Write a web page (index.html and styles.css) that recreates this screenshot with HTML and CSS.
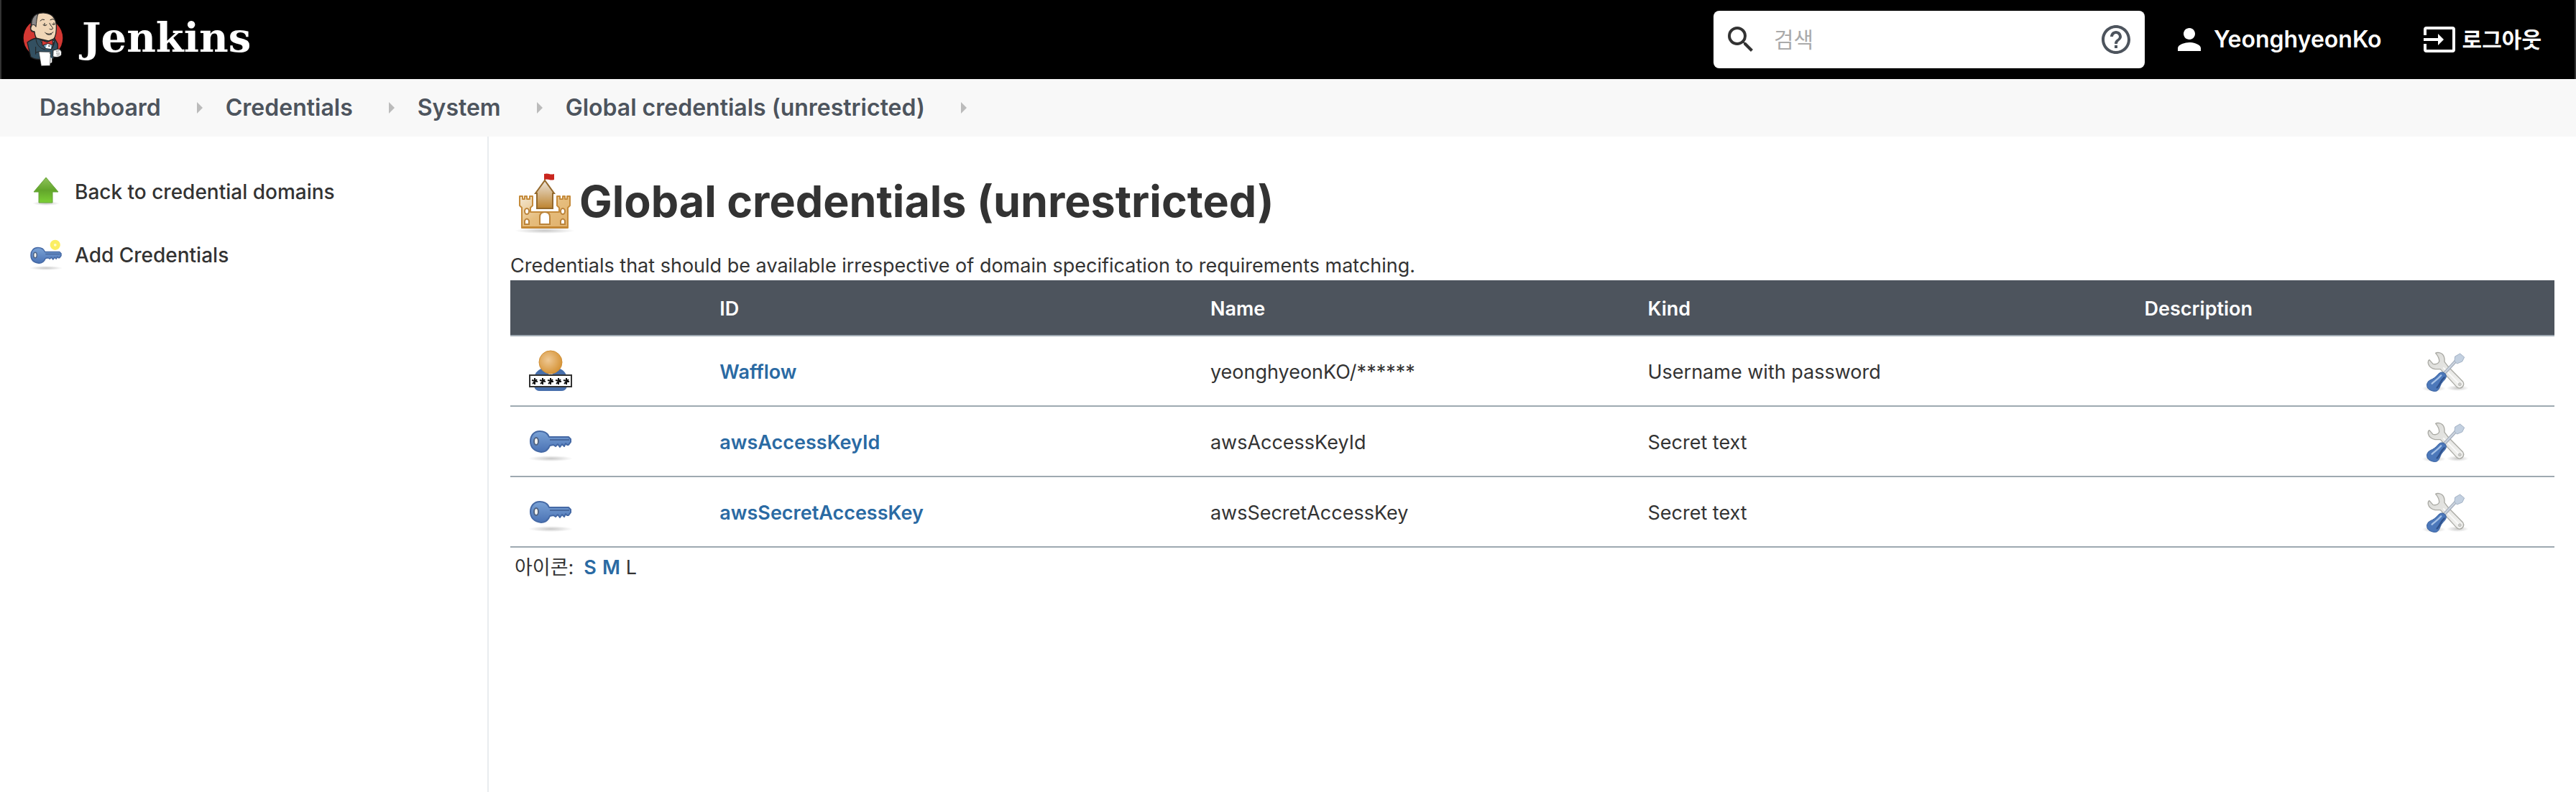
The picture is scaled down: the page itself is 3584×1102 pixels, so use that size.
FILE: index.html
```html
<!DOCTYPE html>
<html lang="ko">
<head>
  <meta charset="UTF-8">
  <title>Global credentials (unrestricted) [Jenkins]</title>
  <link rel="stylesheet" href="styles.css">
</head>
<body>
  <!-- shared icons -->
  <svg class="icon-defs" width="0" height="0" aria-hidden="true">
    <defs>
      <linearGradient id="blueFill" x1="0" y1="0" x2="0" y2="1">
        <stop offset="0" stop-color="#7ba3d6"/>
        <stop offset="1" stop-color="#4a72b4"/>
      </linearGradient>
      <linearGradient id="greenFill" x1="0" y1="0" x2="0" y2="1">
        <stop offset="0" stop-color="#8fc25a"/>
        <stop offset="0.5" stop-color="#62a52b"/>
        <stop offset="1" stop-color="#7cd035"/>
      </linearGradient>
      <linearGradient id="sandFill" x1="0" y1="0" x2="1" y2="1">
        <stop offset="0" stop-color="#f3e8d4"/>
        <stop offset="0.5" stop-color="#e6bd7d"/>
        <stop offset="1" stop-color="#e0b06a"/>
      </linearGradient>
      <linearGradient id="towerFill" x1="0" y1="0" x2="0" y2="1">
        <stop offset="0" stop-color="#ece6dc"/>
        <stop offset="1" stop-color="#bd832f"/>
      </linearGradient>
      <linearGradient id="steelFill" x1="0" y1="0" x2="1" y2="1">
        <stop offset="0" stop-color="#d9d9d6"/>
        <stop offset="1" stop-color="#f3f3f1"/>
      </linearGradient>
      <radialGradient id="headFill" cx="0.4" cy="0.4" r="0.6">
        <stop offset="0" stop-color="#efc995"/>
        <stop offset="1" stop-color="#d6953a"/>
      </radialGradient>
      <radialGradient id="shadow">
        <stop offset="0" stop-color="#000" stop-opacity="0.22"/>
        <stop offset="1" stop-color="#000" stop-opacity="0"/>
      </radialGradient>
      <symbol id="key" viewBox="0 0 64 64">
        <ellipse cx="32" cy="56" rx="31" ry="4" fill="url(#shadow)"/>
        <path d="M17 18c6 0 11 3 13 8h27l3 3v4l-3 4h-2l-2-2-2 4-3-3-3 4-3-4-3 3-3-2-5 1c-2 5-6 9-12 9C9 46 4 40 4 32S9 18 17 18z" fill="url(#blueFill)" stroke="#4569a5" stroke-width="2" stroke-linejoin="round"/>
        <path d="M31 30h27" stroke="#48699f" stroke-width="2"/>
        <ellipse cx="12" cy="32" rx="3" ry="5" fill="#f4f4f0" stroke="#506484" stroke-width="2"/>
      </symbol>
      <symbol id="tools" viewBox="0 0 192 192">
        <ellipse cx="48" cy="170" rx="50" ry="12" fill="url(#shadow)"/>
        <ellipse cx="148" cy="168" rx="46" ry="12" fill="url(#shadow)"/>
        <path d="M56 22c8-5 22-2 29 5 8 8 9 19 8 31l16 21 61 62c6 9 3 24-12 27-6 1-12-2-16-7L76 89H54c-15-3-26-12-29-24-1-7 1-13 5-15l15 17c12 3 22-2 26-10 1-12-4-22-15-35z" fill="url(#steelFill)" stroke="#aaaaa4" stroke-width="4" stroke-linejoin="round"/>
        <path d="M88 82l68 70" stroke="#fafafa" stroke-width="5"/>
        <circle cx="157" cy="152" r="6" fill="#cfcfca" stroke="#aaa" stroke-width="2"/>
        <path d="M93 106l48-52" stroke="#a5aebb" stroke-width="13"/>
        <path d="M94 104l46-49" stroke="#ccd5e1" stroke-width="6"/>
        <path d="M158 24l18 15-9 18-22 9-10-11 2-19z" fill="#c3d0e0" stroke="#a3b2c5" stroke-width="3"/>
        <path d="M74 104c10-6 27 2 26 16-1 11-16 21-21 31-4 8-8 22-16 28-9 5-27 1-37-8-8-8-8-20-2-29 6-8 18-10 27-17 10-7 15-17 23-21z" fill="#4c78ba" stroke="#365f9e" stroke-width="3"/>
        <path d="M79 115c-15 17-25 22-38 34" stroke="#a7c3e8" stroke-width="7" fill="none" stroke-linecap="round"/>
        <path d="M92 124c-15 12-16 28-30 42" stroke="#30528c" stroke-width="7" fill="none" stroke-linecap="round"/>
      </symbol>
    </defs>
  </svg>

  <header class="page-header">
    <a class="logo" href="#">
      <svg class="logo-head" viewBox="90 42 180 240" aria-hidden="true">
        <circle cx="180" cy="156" r="82" fill="#d33833"/>
        <path d="M132 112c-6-22 2-42 20-54 20-12 52-8 67 6 14 14 18 34 16 56-1 24-8 42-20 50-26 10-52 0-62-12-6-8-8-18-9-28-10 0-16-6-16-14-2-10 0-14 4-4z" fill="#f0d6b7" stroke="#222" stroke-width="4"/>
        <path d="M132 102c-2-22 8-42 27-47-5 12-7 34-9 54l-6-8c-6-1-9 0-12 1z" fill="#8b8989" stroke="#222" stroke-width="3"/>
        <path d="M134 104c-10 8-5 24 10 24" fill="#f0d6b7" stroke="#222" stroke-width="3"/>
        <path d="M168 84q8-10 17-5M210 80q10-6 16-2M180 101q8 7 15 0M186 94v8M218 98q6 5 11 0M225 92v7M207 94c4 12 18 20 12 24-4 3-9 2-12 0M188 133c9 8 24 8 34-2M195 140q11 5 20 0" fill="none" stroke="#222" stroke-width="3" stroke-linecap="round"/>
        <path d="M150 156c-12 4-26 10-36 18l14 60c12 10 28 12 48 11l46-4 12-22c4-12 10-20 7-38l-13-23-26 10z" fill="#335061" stroke="#222" stroke-width="4"/>
        <path d="M167 164l22 35 25 3 14-38-24 13z" fill="#7fb0cc" stroke="#222" stroke-width="3"/>
        <path d="M196 180l12-1 6 22-23-3z" fill="#fff"/>
        <path d="M150 158c2 24 14 40 38 46M228 166c-2 17-6 29-15 39M150 216l16-4M149 192v32" fill="none" stroke="#222" stroke-width="3"/>
        <path d="M174 165l23 8 22-10 2 22-21-6-23 8z" fill="#d33833" stroke="#222" stroke-width="3"/>
        <path d="M206 232l11 9v16l-10 6z" fill="#fff"/>
        <path d="M162 213l49 1-2 57-37 1z" fill="#fff" stroke="#222" stroke-width="2"/>
        <path d="M222 207l20-5c12 0 18 12 13 26-6 8-24 9-34 5z" fill="#fff" stroke="#222" stroke-width="3"/>
        <path d="M234 211l14-2M234 219h16M236 227l13-1" stroke="#333" stroke-width="2"/>
        <circle cx="205" cy="189" r="3" fill="#222"/>
        <circle cx="208" cy="219" r="2" fill="#222"/>
      </svg>
      <span class="logo-name">Jenkins</span>
    </a>

    <form class="search">
      <label for="search-box" aria-label="검색">
        <svg class="search-icon" viewBox="3 3 18 18" aria-hidden="true"><path fill="#333" d="M15.500 14h-.79l-.28-.27A6.471 6.471 0 0 0 16 9.500 6.500 6.500 0 1 0 9.500 16c1.610 0 3.090-.59 4.230-1.570l.27.28v.79l5 4.990L20.490 19l-4.990-5zm-6 0C7.010 14 5 11.990 5 9.500S7.010 5 9.500 5 14 7.010 14 9.500 11.990 14 9.500 14z"/></svg>
      </label>
      <input id="search-box" type="text" placeholder="검색">
      <a href="#" aria-label="도움말">
        <svg class="help-icon" viewBox="2 2 20 20" aria-hidden="true"><path fill="#4d545d" d="M11 18h2v-2h-2v2zm1-16C6.480 2 2 6.480 2 12s4.480 10 10 10 10-4.480 10-10S17.520 2 12 2zm0 18c-4.410 0-8-3.590-8-8s3.590-8 8-8 8 3.590 8 8-3.590 8-8 8zm0-14c-2.210 0-4 1.790-4 4h2c0-1.100.9-2 2-2s2 .9 2 2c0 2-3 1.750-3 5h2c0-2.250 3-2.500 3-5 0-2.210-1.790-4-4-4z"/></svg>
      </a>
    </form>

    <nav class="login">
      <a class="user" href="#">
        <svg class="user-icon" viewBox="4 4 16 16" aria-hidden="true"><path fill="#fff" d="M12 12c2.210 0 4-1.790 4-4s-1.790-4-4-4-4 1.790-4 4 1.790 4 4 4zm0 2c-2.670 0-8 1.340-8 4v2h16v-2c0-2.660-5.330-4-8-4z"/></svg>
        YeonghyeonKo
      </a>
      <a class="logout" href="#">
        <svg class="logout-icon" viewBox="0 0 44 36" aria-hidden="true"><path d="M2 12V4q0-2 2-2h36q2 0 2 2v28q0 2-2 2H4q-2 0-2-2v-8" fill="none" stroke="#fff" stroke-width="4"/><path d="M0 16h20v-6l8 8-8 8v-6H0z" fill="#fff"/></svg>
        로그아웃
      </a>
    </nav>
  </header>

  <nav>
    <ol class="breadcrumbs">
      <li><a href="#">Dashboard</a></li>
      <li><a href="#">Credentials</a></li>
      <li><a href="#">System</a></li>
      <li><a href="#">Global credentials (unrestricted)</a></li>
    </ol>
  </nav>

  <div class="page-body">
    <aside class="side-panel">
      <a class="task" href="#">
        <svg viewBox="0 0 48 48" aria-hidden="true">
          <ellipse cx="24" cy="40" rx="19" ry="3" fill="url(#shadow)"/>
          <path d="M24 4l17 20h-8v15H14V24H7z" fill="url(#greenFill)" stroke="#65a238" stroke-width="1" stroke-linejoin="round"/>
        </svg>
        Back to credential domains
      </a>
      <a class="task" href="#">
        <svg viewBox="0 0 64 64" aria-hidden="true">
          <use href="#key"/>
          <circle cx="49" cy="13" r="6" fill="#fffbd0" stroke="#fbee62" stroke-width="7"/>
        </svg>
        Add Credentials
      </a>
    </aside>

    <main class="main-panel">
      <h1>
        <svg viewBox="0 0 96 96" aria-hidden="true">
          <ellipse cx="48" cy="89" rx="42" ry="4" fill="url(#shadow)"/>
          <path d="M48 30V10" stroke="#8a6a3a" stroke-width="1"/>
          <path d="M47 10q4-1 7 0t7 0v8q-4 1-7 0t-7 0z" fill="#c9261e"/>
          <path d="M48 19l13 18h-2v21H37V37h-2z" fill="url(#towerFill)" stroke="#94692c" stroke-width="2"/>
          <path d="M13 41h4v4h3v-4h3v4h4v-4h4v13l-3 3v6h40v-6l-3-3V41h4v4h4v-4h3v4h3v-4h4v13l-3 3v28H16V57l-3-3z" fill="url(#sandFill)" stroke="#c58b3b" stroke-width="2" stroke-linejoin="round"/>
          <path d="M41 80V70q0-7 7-7t7 7v10z" fill="#fff" stroke="#bb843b" stroke-width="2"/>
          <g fill="#fff" stroke="#bb843b" stroke-width="2">
            <ellipse cx="23" cy="62" rx="3" ry="4"/>
            <ellipse cx="73" cy="62" rx="3" ry="4"/>
            <path d="M20 80v-5q3-5 6 0v5zM70 80v-5q3-5 6 0v5z"/>
          </g>
          <path d="M17 84h62" stroke="#c48734" stroke-width="2"/>
        </svg>
        Global credentials (unrestricted)
      </h1>
      <p class="description">Credentials that should be available irrespective of domain specification to requirements matching.</p>

      <table class="credentials">
        <colgroup>
          <col class="col-icon">
          <col class="col-id">
          <col class="col-name">
          <col class="col-kind">
          <col class="col-desc">
          <col class="col-tools">
        </colgroup>
        <thead>
          <tr>
            <th></th>
            <th>ID</th>
            <th>Name</th>
            <th>Kind</th>
            <th>Description</th>
            <th></th>
          </tr>
        </thead>
        <tbody>
          <tr>
            <td class="icon">
              <svg viewBox="0 0 64 64" aria-hidden="true">
                <path d="M9 54V42c1-8 7-13 14-14h18c8 1 13 7 14 14v12q-2 6-8 6H17q-6 0-8-6z" fill="#476fac"/>
                <path d="M24 30h16l-8 10z" fill="#ddd"/>
                <circle cx="32" cy="20" r="16" fill="url(#headFill)" stroke="#d18f35" stroke-width="1"/>
                <path d="M3 38h58v16H3z" fill="#fff" stroke="#333" stroke-width="2"/>
                <path d="M10 42v9M6 45l8 2M7 50l6-6M21 42v9M17 45l8 2M18 50l6-6M32 42v9M28 45l8 2M29 50l6-6M43 42v9M39 45l8 2M40 50l6-6M54 42v9M50 45l8 2M51 50l6-6" stroke="#111" stroke-width="2"/>
              </svg>
            </td>
            <td><a href="#">Wafflow</a></td>
            <td>yeonghyeonKO/******</td>
            <td>Username with password</td>
            <td></td>
            <td class="icon"><a href="#" aria-label="Update"><svg viewBox="0 0 192 192"><use href="#tools"/></svg></a></td>
          </tr>
          <tr>
            <td class="icon"><svg viewBox="0 0 64 64" aria-hidden="true"><use href="#key"/></svg></td>
            <td><a href="#">awsAccessKeyId</a></td>
            <td>awsAccessKeyId</td>
            <td>Secret text</td>
            <td></td>
            <td class="icon"><a href="#" aria-label="Update"><svg viewBox="0 0 192 192"><use href="#tools"/></svg></a></td>
          </tr>
          <tr>
            <td class="icon"><svg viewBox="0 0 64 64" aria-hidden="true"><use href="#key"/></svg></td>
            <td><a href="#">awsSecretAccessKey</a></td>
            <td>awsSecretAccessKey</td>
            <td>Secret text</td>
            <td></td>
            <td class="icon"><a href="#" aria-label="Update"><svg viewBox="0 0 192 192"><use href="#tools"/></svg></a></td>
          </tr>
        </tbody>
      </table>

      <div class="icon-size">
        <span class="icon-size-label">아이콘:</span>
        <a href="#">S</a>
        <a href="#">M</a>
        <span>L</span>
      </div>
    </main>
  </div>
</body>
</html>
```
FILE: styles.css
```css
* {
  box-sizing: border-box;
}
body {
  margin: 0;
  min-height: 100vh;
  display: flex;
  flex-direction: column;
  background: #fff;
  color: #333;
  font-family: Inter, "Noto Sans CJK KR", sans-serif;
  font-size: 27px;
  line-height: 40px;
}
a {
  color: inherit;
  text-decoration: none;
}
svg {
  display: block;
  flex: none;
}
.icon-defs {
  position: absolute;
}

/* header */
.page-header {
  display: flex;
  align-items: center;
  height: 110px;
  padding: 0 46px 0 28px;
  background: #000;
  border: solid #333;
  border-width: 0 2px;
  color: #fff;
}
.logo {
  display: flex;
  align-items: center;
  gap: 24px;
}
.logo-head {
  width: 60px;
  height: 80px;
}
.logo-name {
  font-family: "DejaVu Serif", serif;
  font-size: 56px;
  font-weight: bold;
  line-height: 64px;
  padding-bottom: 6px;
}

/* search box */
.search {
  display: flex;
  align-items: center;
  width: 600px;
  height: 80px;
  margin-left: auto;
  padding: 0 20px;
  background: #fff;
  border-radius: 8px;
}
.search-icon {
  width: 36px;
  height: 36px;
}
.search input {
  flex: 1;
  min-width: 0;
  padding: 0 28px;
  border: none;
  outline: none;
  background: none;
  font: inherit;
  font-size: 30px;
  color: #333;
}
.search input::placeholder {
  color: #aaa;
}
.help-icon {
  width: 40px;
  height: 40px;
}

/* user links */
.login {
  display: flex;
  gap: 58px;
  margin-left: 46px;
  font-weight: 600;
}
.login a {
  display: flex;
  align-items: center;
}
.user {
  gap: 18px;
  font-size: 32px;
}
.logout {
  gap: 10px;
  font-size: 30px;
}
.user-icon {
  width: 32px;
  height: 32px;
}
.logout-icon {
  width: 44px;
  height: 36px;
}

/* breadcrumbs */
.breadcrumbs {
  display: flex;
  align-items: center;
  height: 80px;
  margin: 0;
  padding: 0 55px;
  background: #f8f8f8;
  color: #4d545d;
  font-size: 32px;
  font-weight: 600;
  list-style: none;
}
.breadcrumbs li {
  display: flex;
  align-items: center;
}
.breadcrumbs li::after {
  content: "";
  margin: 0 32px 0 50px;
  border: solid transparent;
  border-width: 8px 0 8px 8px;
  border-left-color: #bbb;
}

/* layout */
.page-body {
  flex: 1;
  display: flex;
}
.side-panel {
  flex: none;
  width: 680px;
  padding: 33px 40px;
  border-right: 2px solid #e9ecef;
}
.task {
  display: flex;
  align-items: center;
  gap: 16px;
  height: 88px;
  font-size: 28px;
  font-weight: 500;
}
.task svg {
  width: 48px;
  height: 48px;
}
.main-panel {
  flex: 1;
  min-width: 0;
  padding: 42px 30px;
}
h1 {
  display: flex;
  align-items: center;
  margin: 0 0 22px;
  font-size: 61px;
  font-weight: 700;
  line-height: 92px;
}
h1 svg {
  width: 96px;
  height: 96px;
}
.description {
  margin: 0;
}

/* credentials table */
.credentials {
  width: 100%;
  table-layout: fixed;
  border-collapse: separate;
  border-spacing: 0;
}
.credentials th,
.credentials td {
  padding: 20px 24px 16px;
  border-bottom: 2px solid #9ea9b1;
  text-align: left;
  vertical-align: middle;
}
.credentials th {
  height: 78px;
  background: #4d545d;
  color: #fff;
  font-weight: 600;
}
.credentials td.icon {
  padding: 16px 24px;
}
.credentials td a {
  color: #2a6aa3;
  font-weight: 600;
}
.credentials svg {
  width: 64px;
  height: 64px;
}
.col-icon {
  width: 9.4%;
}
.col-id {
  width: 24%;
}
.col-name {
  width: 21.4%;
}
.col-kind {
  width: 24.3%;
}
.col-desc {
  width: 13.6%;
}
.col-tools {
  width: 7.3%;
}

/* icon size switch */
.icon-size {
  display: flex;
  gap: 8px;
  padding: 8px 6px;
}
.icon-size-label {
  margin-right: 6px;
}
.icon-size a {
  color: #2a6aa3;
  font-weight: 600;
}
```
